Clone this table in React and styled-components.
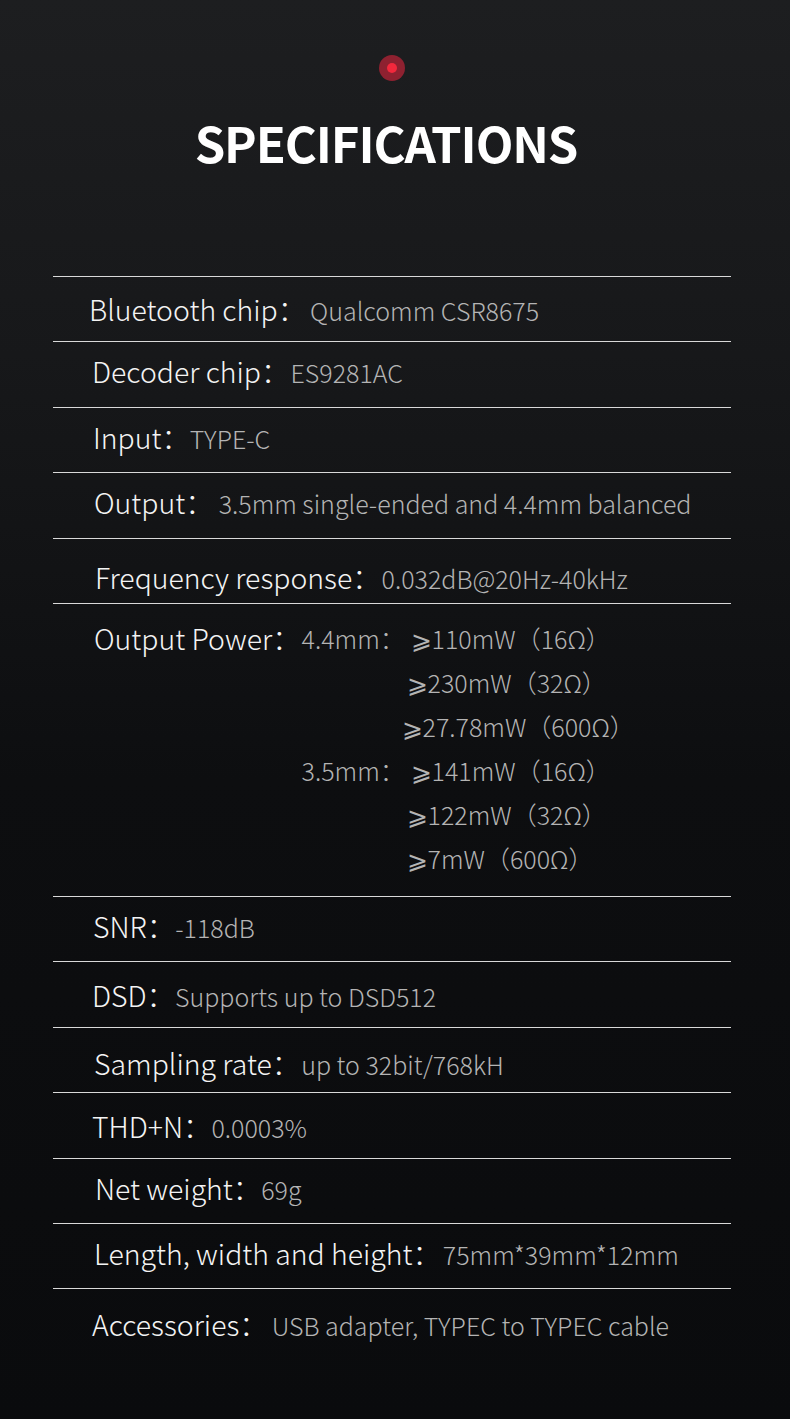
import React from 'react';
import styled, { createGlobalStyle } from 'styled-components';

const GlobalStyle = createGlobalStyle`
  html, body {
    margin: 0;
    padding: 0;
    background: #0b0c0e;
  }
`;

const Page = styled.div`
  width: 790px;
  min-height: 1419px;
  box-sizing: border-box;
  padding-top: 55px;
  background: linear-gradient(180deg, #1d1e20 0%, #17181a 25%, #0d0e10 55%, #0a0b0d 100%);
  font-family: 'Noto Sans CJK SC', 'Noto Sans', sans-serif;
  display: flex;
  flex-direction: column;
  align-items: center;
`;

const Dot = styled.div`
  width: 26px;
  height: 26px;
  margin-right: 6px;
  border-radius: 50%;
  background: #8e2130;
  display: flex;
  align-items: center;
  justify-content: center;

  &::after {
    content: '';
    width: 10px;
    height: 10px;
    border-radius: 50%;
    background: #f2283c;
  }
`;

const Title = styled.h1`
  margin: 26px 18px 0 0;
  font-size: 49px;
  line-height: 70px;
  font-weight: 700;
  color: #ffffff;
  letter-spacing: -1.1px;
`;

const Table = styled.div`
  align-self: flex-start;
  width: 678px;
  margin: 99px 0 0 53px;
`;

const Row = styled.div`
  box-sizing: border-box;
  border-top: 1px solid #d9d9d9;
  min-height: 65.4px;
  padding-left: ${(p) => p.$indent - 53}px;
  padding-top: ${(p) => 11 + (p.$shift || 0)}px;
  display: flex;
  align-items: baseline;
`;

const LastRow = styled(Row)`
  min-height: 0;
`;

const Label = styled.span`
  font-size: 28.4px;
  line-height: 36px;
  font-weight: 300;
  color: #f4f4f4;
  white-space: nowrap;
`;

const Value = styled.span`
  font-size: 25px;
  line-height: 36px;
  font-weight: 300;
  color: #b4b4b4;
  white-space: nowrap;
  margin-left: ${(p) => p.$gap || 0}px;
`;

const PowerRow = styled(Row)`
  min-height: 293px;
  padding-top: 16px;
  align-items: flex-start;
`;

const PowerGrid = styled.div`
  display: grid;
  grid-template-columns: 105px auto;
  row-gap: 8px;
  margin-left: 1px;
`;

const PowerLine = styled(Value)`
  grid-column: 2;
  margin-left: ${(p) => p.$nudge || 0}px;
`;

const Jack = styled(Value)`
  grid-column: 1;
`;

const specs = [
  { label: 'Bluetooth chip：', value: 'Qualcomm CSR8675', indent: 89, gap: 4, shift: 3 },
  { label: 'Decoder chip：', value: 'ES9281AC', indent: 92, gap: 1 },
  { label: 'Input：', value: 'TYPE-C', indent: 93, gap: 0 },
  { label: 'Output：', value: '3.5mm single-ended and 4.4mm balanced', indent: 94, gap: 5 },
  { label: 'Frequency response：', value: '0.032dB@20Hz-40kHz', indent: 95, gap: 1, shift: 9 },
];

const specsAfter = [
  { label: 'SNR：', value: '-118dB', indent: 93, gap: 0 },
  { label: 'DSD：', value: 'Supports up to DSD512', indent: 92, gap: 0, shift: 4 },
  { label: 'Sampling rate：', value: 'up to 32bit/768kH', indent: 94, gap: 1, shift: 6 },
  { label: 'THD+N：', value: '0.0003%', indent: 92, gap: 0, shift: 4 },
  { label: 'Net weight：', value: '69g', indent: 95, gap: 0 },
  { label: 'Length, width and height：', value: '75mm*39mm*12mm', indent: 94, gap: 2 },
];

const renderRow = (spec) => (
  <Row key={spec.label} $indent={spec.indent} $shift={spec.shift}>
    <Label>{spec.label}</Label>
    <Value $gap={spec.gap}>{spec.value}</Value>
  </Row>
);

const App = () => (
  <>
    <GlobalStyle />
    <Page>
      <Dot />
      <Title>SPECIFICATIONS</Title>
      <Table>
        {specs.map(renderRow)}
        <PowerRow $indent={94}>
          <Label>Output Power：</Label>
          <PowerGrid>
            <Jack>4.4mm：</Jack>
            <PowerLine $nudge={4}>⩾110mW（16Ω）</PowerLine>
            <PowerLine>⩾230mW（32Ω）</PowerLine>
            <PowerLine $nudge={-5}>⩾27.78mW（600Ω）</PowerLine>
            <Jack>3.5mm：</Jack>
            <PowerLine $nudge={4}>⩾141mW（16Ω）</PowerLine>
            <PowerLine>⩾122mW（32Ω）</PowerLine>
            <PowerLine>⩾7mW（600Ω）</PowerLine>
          </PowerGrid>
        </PowerRow>
        {specsAfter.map(renderRow)}
        <LastRow $indent={92} $shift={6}>
          <Label>Accessories：</Label>
          <Value $gap={4}>USB adapter, TYPEC to TYPEC cable</Value>
        </LastRow>
      </Table>
    </Page>
  </>
);

export default App;
